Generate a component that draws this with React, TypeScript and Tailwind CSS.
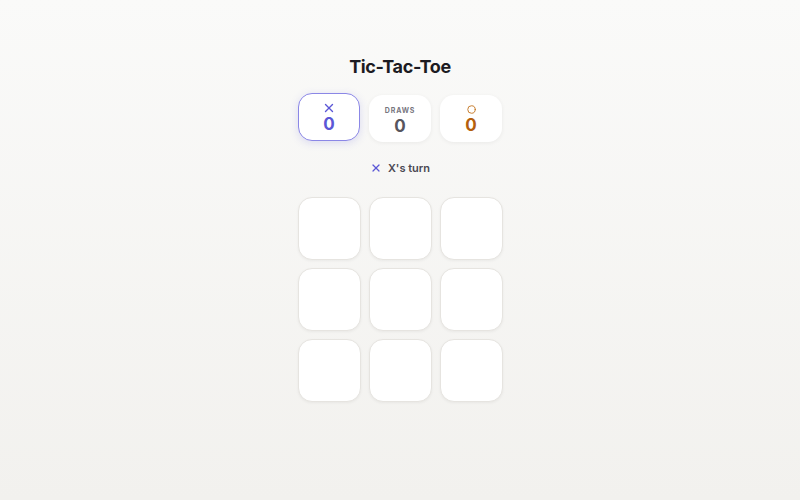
import { X, Circle } from 'lucide-react'

export default function App() {
  const cells = Array.from({ length: 9 })

  return (
    <div
      className="min-h-[500px] w-full bg-gradient-to-b from-[#fafaf9] to-[#f2f1ee] flex flex-col items-center pt-[53px]"
      style={{ fontFamily: 'Inter, "Noto Sans", sans-serif' }}
    >
      <h1 className="text-[18px] leading-7 font-bold text-[#1c1b22] tracking-[-0.02em]">Tic-Tac-Toe</h1>

      {/* scores */}
      <div className="mt-[13px] flex gap-[9px]">
        <div className="w-[62px] h-[48px] rounded-[14px] bg-white border border-[#8b87e6] shadow-[0_2px_8px_rgba(91,87,214,0.18)] flex flex-col items-center justify-center pt-[2px] -translate-y-[1px]">
          <X size={14} strokeWidth={2.4} className="text-[#5b57d6] -my-[1px]" />
          <span className="text-[17px] leading-5 font-bold text-[#5b57d6]">0</span>
        </div>
        <div className="w-[62px] h-[47px] mt-[1px] rounded-[14px] bg-white shadow-[0_1px_4px_rgba(0,0,0,0.06)] flex flex-col items-center justify-center pt-[3px]">
          <span className="text-[7px] leading-[11px] font-bold tracking-[0.12em] text-[#78767f]">DRAWS</span>
          <span className="text-[17px] leading-5 font-bold text-[#57555e]">0</span>
        </div>
        <div className="w-[62px] h-[47px] mt-[1px] rounded-[14px] bg-white shadow-[0_1px_4px_rgba(0,0,0,0.06)] flex flex-col items-center justify-center pt-[3px]">
          <Circle size={9} strokeWidth={2.4} className="text-[#c2721c] mb-[1px]" />
          <span className="text-[17px] leading-5 font-bold text-[#b45f0e]">0</span>
        </div>
      </div>

      {/* status */}
      <div className="mt-[18px] flex items-center gap-[6px] text-[11px] leading-4 font-semibold text-[#4a4852]">
        <X size={12} strokeWidth={2.4} className="text-[#5b57d6]" />
        <span>X's turn</span>
      </div>

      {/* board */}
      <div className="mt-[21px] grid grid-cols-3 gap-[8px]">
        {cells.map((_, i) => (
          <button
            key={i}
            className="w-[63px] h-[63px] rounded-[14px] bg-white border border-[#e6e4e0] shadow-[0_1px_3px_rgba(0,0,0,0.05)]"
          />
        ))}
      </div>
    </div>
  )
}
